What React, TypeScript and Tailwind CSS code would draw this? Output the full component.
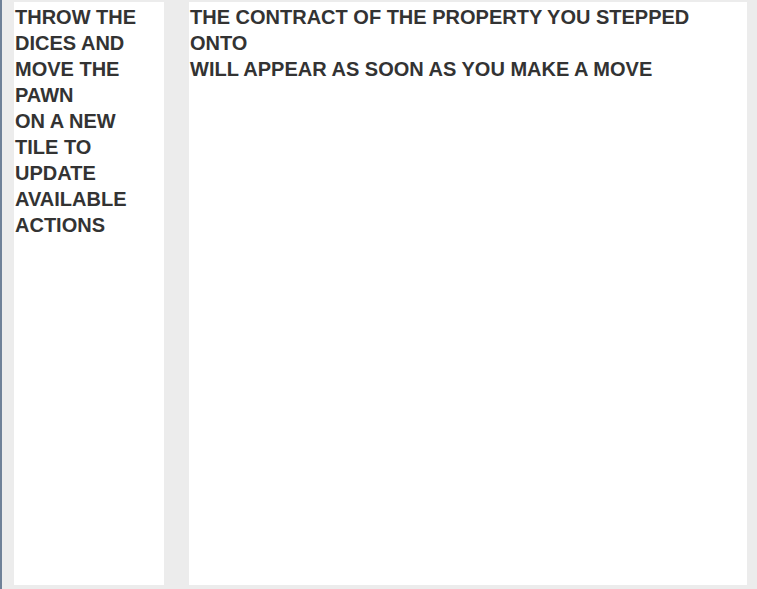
import React from "react";

const leftLines = ["THROW THE", "DICES AND", "MOVE THE", "PAWN", "ON A NEW", "TILE TO", "UPDATE", "AVAILABLE", "ACTIONS"];
const rightLines = ["THE CONTRACT OF THE PROPERTY YOU STEPPED", "ONTO", "WILL APPEAR AS SOON AS YOU MAKE A MOVE"];

export default function App() {
  return (
    <div
      className="flex h-[589px] w-[757px] bg-[#ececec] border-l-2 border-[#6f8198] pt-[2px] pb-[4px] text-[#333333]"
      style={{ fontFamily: '"Liberation Sans", Arial, sans-serif' }}
    >
      <div className="ml-[12px] w-[150px] bg-white px-[1px] pt-[2px] text-[20px] font-bold leading-[26px]">
        {leftLines.map((l) => (
          <div key={l} className="whitespace-nowrap">{l}</div>
        ))}
      </div>
      <div className="ml-[25px] w-[558px] bg-white px-[1px] pt-[2px] text-[20px] font-bold leading-[26px]">
        {rightLines.map((l) => (
          <div key={l} className="whitespace-nowrap">{l}</div>
        ))}
      </div>
    </div>
  );
}
